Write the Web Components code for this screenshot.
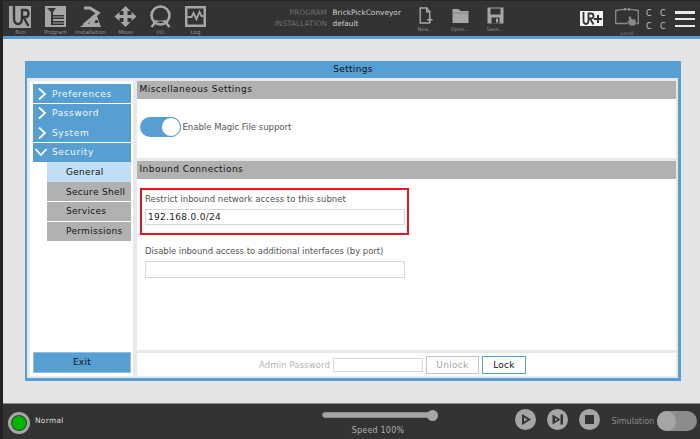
<!DOCTYPE html>
<html>
<head>
<meta charset="utf-8">
<style>
  html, body { margin: 0; padding: 0; width: 700px; height: 439px; overflow: hidden; }
  body { font-family: "DejaVu Sans", sans-serif; background: #e4e4e4; }
</style>
</head>
<body>
<ur-app>
  <ur-header slot="header"></ur-header>
  <settings-dialog title-text="Settings">
    <ur-nav slot="nav">
      <nav-item kind="top">Preferences</nav-item>
      <nav-item kind="top">Password</nav-item>
      <nav-item kind="top">System</nav-item>
      <nav-item kind="open">Security</nav-item>
      <nav-item kind="selected">General</nav-item>
      <nav-item kind="sub">Secure Shell</nav-item>
      <nav-item kind="sub">Services</nav-item>
      <nav-item kind="sub">Permissions</nav-item>
    </ur-nav>
    <settings-section slot="main" heading="Miscellaneous Settings" style="height:77px;flex:none">
      <toggle-row>Enable Magic File support</toggle-row>
    </settings-section>
    <settings-section slot="main" heading="Inbound Connections" style="flex:1">
      <subnet-form></subnet-form>
    </settings-section>
    <password-bar slot="bar"></password-bar>
  </settings-dialog>
  <ur-footer slot="footer"></ur-footer>
</ur-app>

<script>
// outer shell: header, grey work area, footer
class UrApp extends HTMLElement {
  constructor() {
    super();
    this.attachShadow({ mode: 'open' });
    this.shadowRoot.innerHTML = `
      <style>
        :host { display: flex; flex-direction: column; width: 700px; height: 439px; border-left: 3px solid #232323; box-sizing: border-box; }
        .work { flex: 1; padding: 22px 19px 22px 22px; display: flex; min-height: 0; }
      </style>
      <slot name="header"></slot>
      <div class="work"><slot></slot></div>
      <slot name="footer"></slot>
    `;
  }
}

class UrHeader extends HTMLElement {
  constructor() {
    super();
    this.attachShadow({ mode: 'open' });
    this.shadowRoot.innerHTML = `
      <style>
        :host { display: flex; height: 39px; box-sizing: border-box; background: #333; border-top: 1px solid #262626; border-bottom: 3px solid #559fd2; color: #a6a6a6; align-items: stretch; flex: none; }
        .tabs { display: flex; width: 210px; flex: none; }
        .tab { width: 35px; display: flex; flex-direction: column; align-items: center; padding-top: 4px; box-sizing: border-box; }
        .tab svg { display: block; width: 23px; height: 23px; }
        .tab span { font-size: 5.5px; line-height: 7px; color: #8e8e8e; margin-top: 1px; white-space: nowrap; }
        .info { width: 140.5px; flex: none; margin-left: 54px; display: grid; grid-template-columns: 60px auto; column-gap: 5.5px; font-size: 7.4px; line-height: 11px; align-content: start; padding-top: 6px; box-sizing: border-box; white-space: nowrap; }
        .info b { font-weight: normal; color: #6f6f6f; text-align: right; }
        .info i { font-style: normal; color: #cfcfcf; }
        .files { display: flex; width: 105px; flex: none; }
        .file { width: 35px; display: flex; flex-direction: column; align-items: center; padding-top: 6px; box-sizing: border-box; }
        .file svg { display: block; width: 17px; height: 17px; }
        .file span { font-size: 5px; line-height: 7px; color: #8e8e8e; margin-top: 1.5px; white-space: nowrap; }
        .right { flex: 1; display: flex; align-items: flex-start; margin-left: 67.5px; }
        .urplus { width: 23px; height: 15px; margin-top: 10px; display: block; flex: none; }
        .local { width: 24px; margin-left: 12px; margin-top: 7px; display: flex; flex-direction: column; align-items: center; flex: none; }
        .local svg { display: block; width: 24px; height: 18px; }
        .local span { font-size: 5px; line-height: 6px; color: #7c7c7c; margin-top: 4px; }
        .cc { display: grid; grid-template-columns: 6px 6px; column-gap: 8px; row-gap: 2px; margin: 6.500px 0 0 7px; font-size: 8px; line-height: 11px; color: #c8c8c8; flex: none; }
        .burger { width: 20px; height: 16px; margin: 10px 0 0 9px; display: flex; flex-direction: column; justify-content: space-between; flex: none; }
        .burger i { display: block; height: 2.500px; background: #e8e8e8; }
      </style>
      <div class="tabs">
        <div class="tab"><svg viewBox="0 0 23 23"><path fill="#a6a6a6" d="M0 1h22v22H0z"/><path fill="none" stroke="#333" stroke-width="2.400" d="M5 0v13q0 6 4 6t4-6V5h3.500q3 0 3 3.500t-3 3.500h-2l5 9"/></svg><span>Run</span></div>
        <div class="tab"><svg viewBox="0 0 23 23"><path fill="#a6a6a6" d="M1 1h21v21H1z"/><path fill="#333" d="M3 3h9l-3 4v3h11v4H9v2h11v4H7V7L3 3z"/><path fill="#a6a6a6" d="M9 11.500h11v1H9zM9 17.500h11v1H9z"/></svg><span>Program</span></div>
        <div class="tab"><svg viewBox="0 0 23 23"><path fill="none" stroke="#a6a6a6" stroke-width="3.200" d="M5 3h6l8 5-8 7-6 5"/><path fill="#a6a6a6" d="M1 22l4-3h5l4-7 4-1 4 11H1z"/><path fill="#333" d="M16.500 15h2l1 3h-4z"/></svg><span>Installation</span></div>
        <div class="tab"><svg viewBox="0 0 23 23"><path fill="#a6a6a6" d="M11.500 1l5 5h-3v4h4V7l5 4.500-5 4.500v-3h-4v4h3l-5 5-5-5h3v-4h-4v3l-5-4.500 5-4.500v3h4V6h-3z"/></svg><span>Move</span></div>
        <div class="tab"><svg viewBox="0 0 23 23"><circle cx="11.500" cy="10.500" r="9" fill="none" stroke="#a6a6a6" stroke-width="2.600"/><path fill="none" stroke="#a6a6a6" stroke-width="2.600" d="M2.500 22l5-6q4-2 8 0l5 6"/><path fill="#333" d="M7.500 12.500h8v3h-8z"/></svg><span>I/O</span></div>
        <div class="tab"><svg viewBox="0 0 23 23"><path fill="#a6a6a6" d="M1 1h21v21H1z"/><path fill="#333" d="M3.500 3.500h16v16h-16z"/><path fill="none" stroke="#a6a6a6" stroke-width="1.800" d="M3.500 12h4l2-4 3 6 3-7 2 4h2"/></svg><span>Log</span></div>
      </div>
      <div class="info">
        <b>PROGRAM</b><i>BrickPickConveyor</i>
        <b>INSTALLATION</b><i>default</i>
      </div>
      <div class="files">
        <div class="file"><svg viewBox="0 0 17 17"><path fill="none" stroke="#a6a6a6" stroke-width="1.400" d="M3.200 1h6.500l3 3.500v11.500H3.200z"/><path fill="#a6a6a6" d="M9 .500h1.400V4h3v1.400H9zM10 12h2V10h1.500v2h2v1.500h-2v2H12v-2h-2z"/></svg><span>New...</span></div>
        <div class="file"><svg viewBox="0 0 17 17"><path fill="#a6a6a6" d="M.500 2h6l2 2h8v12H.500z"/><path fill="#8a8a8a" d="M.500 5.500h16v1H.500z"/></svg><span>Open...</span></div>
        <div class="file"><svg viewBox="0 0 17 17"><path fill="#a6a6a6" d="M.500 .500h16v16H.500z"/><path fill="#333" d="M3.500 1.500h10v6h-10zM4.500 10.500h8v6h-8z"/><path fill="#a6a6a6" d="M9 11.500h2v4H9z"/></svg><span>Save...</span></div>
      </div>
      <div class="right">
        <svg class="urplus" viewBox="0 0 23 15"><path fill="#f4f4f4" d="M0 0h23v15H0z"/><path fill="none" stroke="#333" stroke-width="1.800" d="M3.500 1v8.500q0 3.500 2.500 3.500t2.500-3.500V2.500H11q2.500 0 2.500 2.500T11 7.500h-1l3.500 6"/><path fill="#333" d="M17 4h2v3h3v2h-3v3h-2V9h-3V7h3z"/></svg>
        <div class="local">
          <svg viewBox="0 0 24 18"><path fill="none" stroke="#8a8a8a" stroke-width="1.300" d="M.700 2.500q11-2.400 22.600 0v13H.700z"/><path fill="#8a8a8a" d="M9 0h2v2.500H9zM13 0h2v2.500h-2z"/><path fill="#8a8a8a" stroke="#333" stroke-width=".8" d="M13.500 8h2l1.500 3h3l1.500 3.500-1.500 3.500h-5l-3.500-5h2z"/></svg>
          <span>Local</span>
        </div>
        <div class="cc"><span>C</span><span>C</span><span>C</span><span>C</span></div>
        <div class="burger"><i></i><i></i><i></i></div>
      </div>
    `;
  }
}

class SettingsDialog extends HTMLElement {
  constructor() {
    super();
    this.attachShadow({ mode: 'open' });
    this.shadowRoot.innerHTML = `
      <style>
        :host { display: flex; flex-direction: column; flex: 1; box-sizing: border-box; border: solid #559fd2; border-width: 0 3px 3px 2px; background: #fff; min-width: 0; }
        .title { height: 17px; background: #559fd2; text-align: center; font-size: 9px; line-height: 17px; letter-spacing: .3px; color: #111; flex: none; margin: 0 -3px 0 -2px; }
        .body { flex: 1; display: flex; min-height: 0; border: solid #e8e8e8; border-width: 3px 2px 2px 3px; }
        .left { width: 103px; box-sizing: border-box; padding: 3px 2px 3px 3px; display: flex; flex-direction: column; justify-content: space-between; background: #fff; flex: none; }
        .exit { height: 21px; box-sizing: border-box; background: #559fd2; border: 1px solid #8fc0e4; text-align: center; font-size: 9px; line-height: 19px; color: #111; letter-spacing: .3px; }
        .right { flex: 1; display: flex; flex-direction: column; background: #e8e8e8; border-left: 4px solid #e8e8e8; min-width: 0; gap: 3px; }
        .mains { flex: 1; display: flex; flex-direction: column; gap: 3px; min-height: 0; }
      </style>
      <div class="title"></div>
      <div class="body">
        <div class="left">
          <slot name="nav"></slot>
          <div class="exit">Exit</div>
        </div>
        <div class="right">
          <div class="mains"><slot name="main"></slot></div>
          <slot name="bar"></slot>
        </div>
      </div>
    `;
    this.shadowRoot.querySelector('.title').textContent = this.getAttribute('title-text') || '';
  }
}

class UrNav extends HTMLElement {
  constructor() {
    super();
    this.attachShadow({ mode: 'open' });
    this.shadowRoot.innerHTML = `
      <style>:host { display: flex; flex-direction: column; gap: .6px; }</style>
      <slot></slot>
    `;
  }
}

class NavItem extends HTMLElement {
  constructor() {
    super();
    this.attachShadow({ mode: 'open' });
    const kind = this.getAttribute('kind') || 'top';
    let arrow = '';
    if (kind === 'top') arrow = '<svg viewBox="0 0 12 14"><path d="M3 1.500l6 5.500-6 5.500" fill="none" stroke="#fff" stroke-width="1.800"/></svg>';
    if (kind === 'open') arrow = '<svg viewBox="0 0 14 12"><path d="M1.500 3l5.500 6 5.500-6" fill="none" stroke="#fff" stroke-width="1.800"/></svg>';
    this.shadowRoot.innerHTML = `
      <style>
        :host { display: flex; height: 19px; flex: none; align-items: center; box-sizing: border-box; font-size: 9px; white-space: nowrap; }
        :host([kind="top"]), :host([kind="open"]) { background: #559fd2; color: #f2f7fb; letter-spacing: .62px; }
        :host([kind="sub"]), :host([kind="selected"]) { margin-left: 14px; color: #111; padding-left: 19px; letter-spacing: .3px; }
        :host([kind="sub"]) { background: #b1b1b1; }
        :host([kind="selected"]) { background: #c0dff5; height: 20px; margin-top: -.6px; }
        svg { display: block; flex: none; }
        :host([kind="top"]) svg { width: 12px; height: 14px; margin: 0 4px 0 3px; }
        :host([kind="open"]) svg { width: 14px; height: 12px; margin: 0 4px 0 1px; }
      </style>
      ${arrow}<slot></slot>
    `;
  }
}

class SettingsSection extends HTMLElement {
  constructor() {
    super();
    this.attachShadow({ mode: 'open' });
    this.shadowRoot.innerHTML = `
      <style>
        :host { display: flex; flex-direction: column; background: #fff; min-height: 0; box-sizing: border-box; }
        .head { height: 18px; background: #b1b1b1; color: #111; font-size: 9px; line-height: 17px; padding-left: 2.500px; letter-spacing: .45px; flex: none; }
      </style>
      <div class="head"></div>
      <slot></slot>
    `;
    this.shadowRoot.querySelector('.head').textContent = this.getAttribute('heading') || '';
  }
}

class ToggleRow extends HTMLElement {
  constructor() {
    super();
    this.attachShadow({ mode: 'open' });
    this.shadowRoot.innerHTML = `
      <style>
        :host { display: flex; align-items: center; padding: 18px 0 0 2.500px; font-size: 8.500px; color: #555; }
        .sw { width: 41px; height: 20px; box-sizing: border-box; border-radius: 10px; background: #559fd2; position: relative; flex: none; margin-right: 2px; }
        .sw::after { content: ""; position: absolute; right: 0; top: 0; width: 20px; height: 20px; box-sizing: border-box; border-radius: 50%; background: #fff; border: 1.500px solid #559fd2; }
      </style>
      <div class="sw"></div><slot></slot>
    `;
  }
}

class SubnetForm extends HTMLElement {
  constructor() {
    super();
    this.attachShadow({ mode: 'open' });
    this.shadowRoot.innerHTML = `
      <style>
        :host { display: block; padding: 9px 0 0 3px; font-size: 8.500px; color: #555; }
        .box { width: 269px; height: 47px; box-sizing: border-box; border: 2px solid #e8141f; padding: 4px 0 0 3px; }
        .plain { padding: 11px 0 0 5px; }
        .lab { line-height: 11px; height: 11px; white-space: nowrap; letter-spacing: .03px; }
        .plain .lab { letter-spacing: -.05px; }
        .field { width: 260px; height: 16px; box-sizing: border-box; border: 1px solid #d8d8d8; background: #fff; margin-top: 4px; padding-left: 2px; font-size: 9px; line-height: 14px; color: #222; letter-spacing: .3px; }
        .plain .field { height: 17px; }
      </style>
      <div class="box">
        <div class="lab">Restrict inbound network access to this subnet</div>
        <div class="field">192.168.0.0/24</div>
      </div>
      <div class="plain">
        <div class="lab">Disable inbound access to additional interfaces (by port)</div>
        <div class="field"></div>
      </div>
    `;
  }
}

class PasswordBar extends HTMLElement {
  constructor() {
    super();
    this.attachShadow({ mode: 'open' });
    this.shadowRoot.innerHTML = `
      <style>
        :host { display: flex; align-items: center; justify-content: flex-end; height: 23px; box-sizing: border-box; background: #fff; flex: none; font-size: 8.500px; color: #b4b4b4; padding-right: 150px; letter-spacing: .1px; }
        .pw { width: 90px; height: 14px; box-sizing: border-box; border: 1px solid #d8d8d8; margin: 0 3px 0 3px; }
        .btn { width: 53px; height: 18px; box-sizing: border-box; border: 1px solid #c4c4c4; text-align: center; font-size: 9px; line-height: 16px; letter-spacing: .3px; color: #a6a6a6; }
        .btn.on { width: 44px; margin-left: 3px; border: 1px solid #559fd2; color: #111; }
      </style>
      <span>Admin Password</span><div class="pw"></div><div class="btn">Unlock</div><div class="btn on">Lock</div>
    `;
  }
}

class UrFooter extends HTMLElement {
  constructor() {
    super();
    this.attachShadow({ mode: 'open' });
    this.shadowRoot.innerHTML = `
      <style>
        :host { display: flex; height: 36px; box-sizing: border-box; background: #333; border-top: 1px solid #8c8c8c; flex: none; }
        .state { display: flex; align-items: flex-start; width: 316px; box-sizing: border-box; padding: 8px 0 0 5px; flex: none; }
        .lamp { width: 22px; height: 22px; border-radius: 50%; box-sizing: border-box; background: #00b800; border: 3.500px solid #a6a6a6; box-shadow: inset 0 0 0 1px #333; flex: none; }
        .state span { font-size: 7.500px; line-height: 11px; color: #d8d8d8; margin: 3px 0 0 5px; letter-spacing: .25px; }
        .speed { width: 116px; flex: none; display: flex; flex-direction: column; align-items: center; margin-left: 3px; }
        .track { width: 114px; height: 6px; box-sizing: border-box; margin-top: 8px; border: 1px solid #8c8c8c; border-radius: 3px; background: #a6a6a6; position: relative; align-self: flex-start; }
        .track::after { content: ""; position: absolute; right: -3px; top: -3.500px; width: 11px; height: 11px; border-radius: 50%; background: #a6a6a6; }
        .speed span { font-size: 8px; line-height: 10px; color: #b0b0b0; margin: 8px 4px 0 0; letter-spacing: .2px; }
        .ctl { display: flex; gap: 11px; margin-left: 76.500px; align-self: flex-start; margin-top: 5px; flex: none; }
        .ctl svg { width: 21px; height: 21px; display: block; }
        .sim { display: flex; align-items: center; align-self: flex-start; margin: 7px 0 0 12px; font-size: 8px; color: #8a8a8a; flex: none; }
        .simsw { width: 40px; height: 20px; border-radius: 10px; background: #8c8c8c; margin-left: 2.500px; position: relative; }
        .simsw::after { content: ""; position: absolute; left: 0; top: 0; width: 19px; height: 20px; border-radius: 50%; background: #a6a6a6; }
      </style>
      <div class="state"><div class="lamp"></div><span>Normal</span></div>
      <div class="speed"><div class="track"></div><span>Speed 100%</span></div>
      <div class="ctl">
        <svg viewBox="0 0 21 21"><circle cx="10.500" cy="10.500" r="10.500" fill="#a6a6a6"/><path fill="#333" d="M7 5l9 5.500-9 5.500zM9 8.500v4l3.500-2z"/></svg>
        <svg viewBox="0 0 21 21"><circle cx="10.500" cy="10.500" r="10.500" fill="#a6a6a6"/><path fill="#333" d="M5.500 5.500l8 5v-5h2.500v10h-2.500v-5l-8 5zM8 9v3l2.500-1.500z"/></svg>
        <svg viewBox="0 0 21 21"><circle cx="10.500" cy="10.500" r="10.500" fill="#a6a6a6"/><path fill="#333" d="M6 6h9v9H6z"/></svg>
      </div>
      <div class="sim"><span>Simulation</span><div class="simsw"></div></div>
    `;
  }
}

customElements.define('ur-app', UrApp);
customElements.define('ur-header', UrHeader);
customElements.define('settings-dialog', SettingsDialog);
customElements.define('ur-nav', UrNav);
customElements.define('nav-item', NavItem);
customElements.define('settings-section', SettingsSection);
customElements.define('toggle-row', ToggleRow);
customElements.define('subnet-form', SubnetForm);
customElements.define('password-bar', PasswordBar);
customElements.define('ur-footer', UrFooter);
</script>
</body>
</html>
